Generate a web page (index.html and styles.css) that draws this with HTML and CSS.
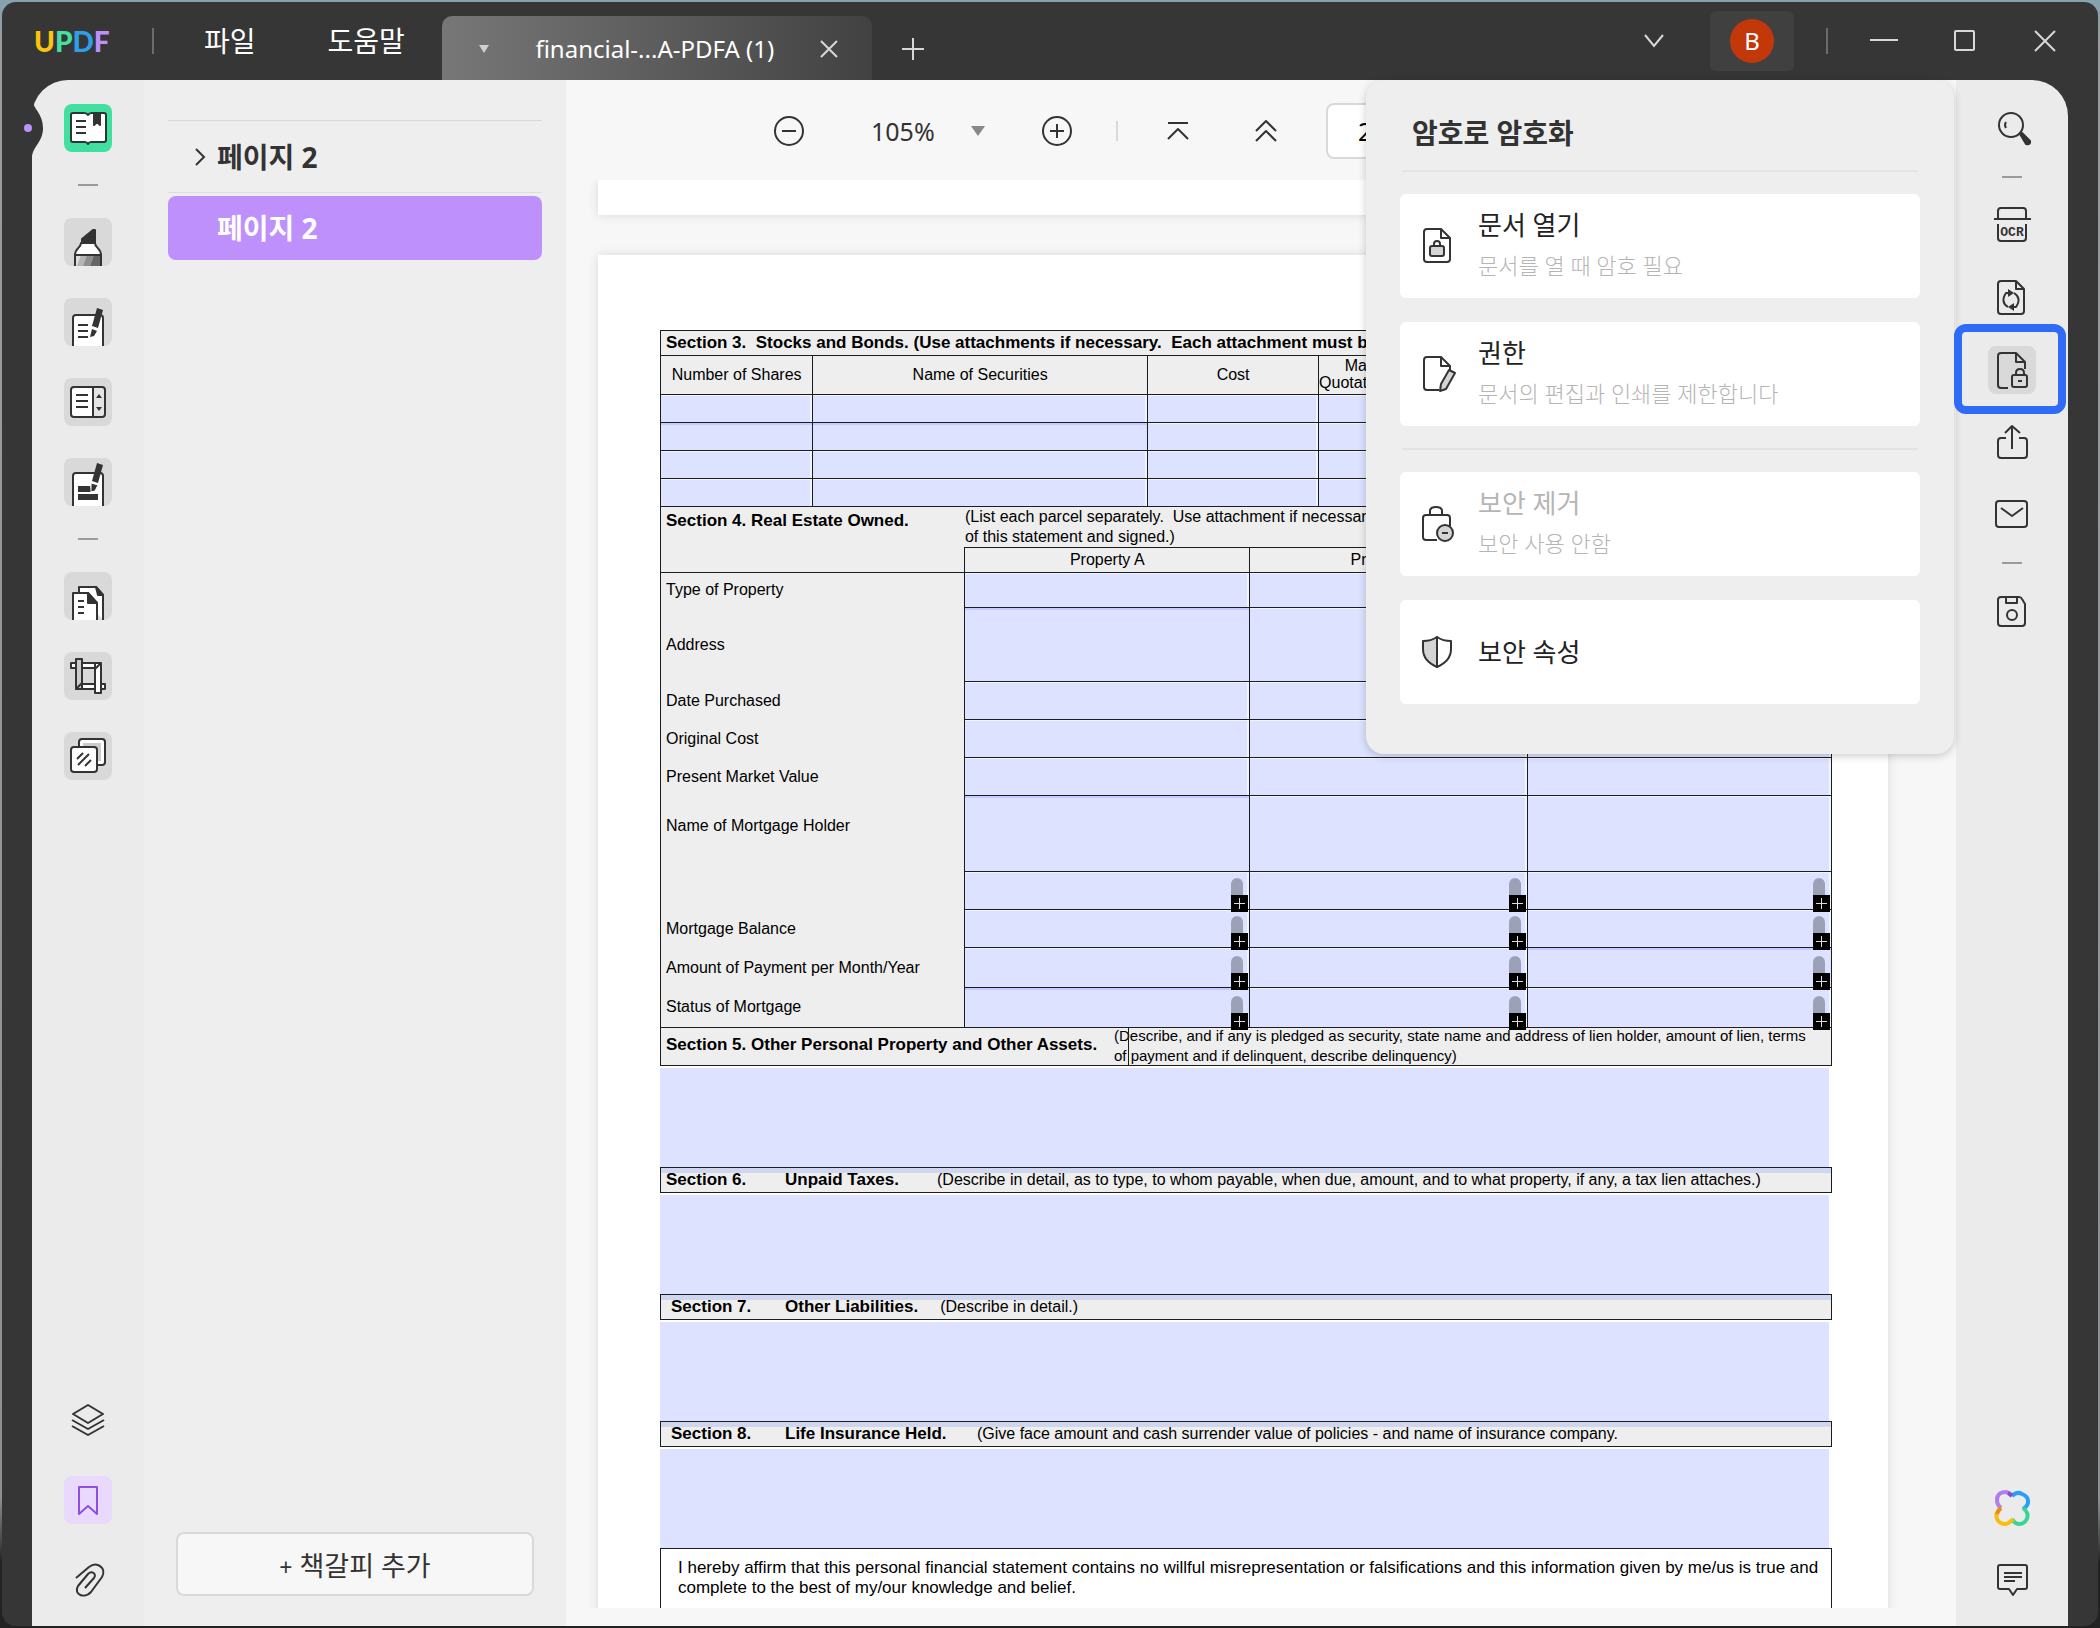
FILE: index.html
```html
<!DOCTYPE html>
<html lang="ko">
<head>
<meta charset="utf-8">
<title>UPDF</title>
<link rel="stylesheet" href="styles.css">
</head>
<body>
<div class="app">
  <header class="titlebar">
    <div class="logo" aria-label="UPDF"><span class="logo-u">U</span><span class="logo-p">P</span><span class="logo-d">D</span><span class="logo-f">F</span></div>
    <span class="bar-divider"></span>
    <nav class="menu"><button class="menu-item">파일</button><button class="menu-item">도움말</button></nav>
    <div class="tab">
      <button class="plain" aria-label="탭 목록"><svg width="12" height="10" viewBox="0 0 12 10"><path d="M1 1h10L6 9z" fill="#d0d0d0"/></svg></button>
      <span class="tab-name">financial-...A-PDFA (1)</span>
      <button class="plain" aria-label="탭 닫기"><svg width="18" height="18" viewBox="0 0 18 18" class="light"><path d="M1 1l16 16M17 1L1 17"/></svg></button>
    </div>
    <button class="plain new-tab" aria-label="새 탭"><svg width="24" height="24" viewBox="0 0 24 24" class="light"><path d="M12 1v22M1 12h22"/></svg></button>
    <div class="window-tools">
      <button class="plain chevron" aria-label="더 보기"><svg width="22" height="14" viewBox="0 0 22 14" class="light"><path d="M2 1l9 11 9-11"/></svg></button>
      <button class="account" aria-label="계정"><span class="avatar">B</span></button>
      <span class="bar-divider"></span>
      <button class="plain win" aria-label="최소화"><svg width="28" height="22" viewBox="0 0 28 22" class="light"><path d="M0 10h28"/></svg></button>
      <button class="plain win" aria-label="최대화"><svg width="22" height="22" viewBox="0 0 22 22" class="light"><rect x="1" y="1" width="19" height="19" rx="1"/></svg></button>
      <button class="plain win" aria-label="닫기"><svg width="22" height="22" viewBox="0 0 22 22" class="light"><path d="M1 1l20 20M21 1L1 21"/></svg></button>
    </div>
  </header>

  <main class="workspace">
    <aside class="rail rail-left">
      <svg class="notch" width="24" height="60" viewBox="0 0 24 60"><path d="M8 0c1 8 11 14 11 28S9 46 8 57V0z" fill="#363636"/><circle cx="4" cy="28" r="4" fill="#be90fc"/></svg>
      <button class="tool tool-active" aria-label="읽기"><svg viewBox="0 0 48 48"><path d="M9 9h11q3 0 4 2 1-2 4-2h12q2 0 2 2v25q0 2-2 2H27q-2 0-3 2-1-2-3-2H9q-2 0-2-2V11q0-2 2-2z" fill="#fff"/><path d="M12 17h10M12 23h10M12 29h10"/><path d="M30 9h6v12l-3-3-3 3z" class="solid"/></svg></button>
      <span class="rail-divider"></span>
      <button class="tool tool-tile" aria-label="주석"><svg viewBox="0 0 48 48"><path d="M18 25v-4l11-9h2v13z" class="solid"/><path d="M17 25h14c0 5 6 5 6 12H11c0-7 6-7 6-12z" fill="#fff"/><path d="M11 37h26v11H11z" fill="#ddd" stroke="none"/><path d="M17 37h6l-4 11h-6z" fill="#b5b5b5" stroke="none"/><path d="M23 37h7l-4 11h-7z" fill="#8e8e8e" stroke="none"/><path d="M30 37h7v11H26z" fill="#666" stroke="none"/><path d="M11 48V37h26v11"/></svg></button>
      <button class="tool tool-tile" aria-label="편집"><svg viewBox="0 0 48 48"><path d="M9 48V20q0-3 3-3h24q3 0 3 3v28" fill="#fff"/><path d="M14 27h10M14 33h10M14 39h10"/><path d="M33 10l6 2-5 18-6-2z" class="solid" stroke="none"/><path d="M28 31l5 2-3 5-4 1z" class="solid" stroke="none"/></svg></button>
      <button class="tool tool-tile" aria-label="양식"><svg viewBox="0 0 48 48"><path d="M29 9h9q3 0 3 3v24q0 3-3 3h-9z" fill="#e4e4e4"/><path d="M29 9H10q-3 0-3 3v24q0 3 3 3h19z" fill="#fff"/><path d="M12 17h12M12 23h12M12 29h12"/><path d="M32 20l3-4 3 4zM32 29l3 4 3-4z" class="solid" stroke="none"/></svg></button>
      <button class="tool tool-tile" aria-label="교정"><svg viewBox="0 0 48 48"><path d="M9 48V18q0-3 3-3h24q3 0 3 3v30" fill="#fff"/><path d="M14 28h12l2 6H14zM14 36h20v6H14z" class="solid" stroke="none"/><path d="M33 5l6 2-5 18-6-2z" class="solid" stroke="none"/><path d="M27 25l7 2-3 6-4 1z" class="solid" stroke="#fff" stroke-width="1"/></svg></button>
      <span class="rail-divider"></span>
      <button class="tool tool-tile" aria-label="페이지 구성"><svg viewBox="0 0 48 48"><path d="M15 20v-5h17l7 8v25" fill="#fff"/><path d="M32 15l7 8h-5z" class="solid"/><path d="M9 48V21h15l9 10v17" fill="#fff"/><path d="M24 21l9 10h-9z" class="solid"/><path d="M14 29h6M14 35h6M14 41h6"/></svg></button>
      <button class="tool tool-tile" aria-label="자르기"><svg viewBox="0 0 48 48"><path d="M7 11h29v5H7zM12 32h29v5H12z" fill="#fff"/><path d="M12 7h6v30h-6z" fill="#ccc"/><path d="M31 11h6v30h-6z" fill="#fff"/><path d="M12 37l6-6M31 17l6-6"/></svg></button>
      <button class="tool tool-tile" aria-label="워터마크"><svg viewBox="0 0 48 48"><rect x="15" y="7" width="26" height="26" rx="3" fill="#fff"/><path d="M19 11h18v18H19z" fill="#ccc" stroke="none"/><rect x="7" y="15" width="26" height="25" rx="3" fill="#fff"/><path d="M13 27l6-6M14 33l11-11M21 34l6-6"/></svg></button>
      <div class="rail-bottom">
        <button class="tool" aria-label="레이어"><svg viewBox="0 0 48 48"><path d="M24 9l15 9-15 9-15-9zM8 24l16 9 16-9M8 30l16 9 16-9"/></svg></button>
        <button class="tool tool-bookmark" aria-label="책갈피"><svg viewBox="0 0 48 48"><path d="M15 11h18v27l-9-8-9 8z" stroke="#8f50df"/></svg></button>
        <button class="tool" aria-label="첨부파일"><svg viewBox="0 0 48 48"><path d="M12 22l13-11c8-6 18 1 13 10L27 36c-6 7-18 3-13-6l10-12c4-4 9 0 6 4L21 32"/></svg></button>
      </div>
    </aside>

    <section class="bookmarks">
      <ul class="tree">
        <li class="tree-row"><svg width="12" height="20" viewBox="0 0 12 20"><path d="M2 2l8 8-8 8" fill="none" stroke="#333" stroke-width="2"/></svg><span>페이지 2</span></li>
        <li class="tree-row tree-selected"><span>페이지 2</span></li>
      </ul>
      <button class="add-bookmark"><span class="plus">+</span> 책갈피 추가</button>
    </section>

    <section class="viewer">
      <div class="toolbar">
        <button class="plain" aria-label="축소"><svg width="32" height="32" viewBox="0 0 32 32" class="dark"><circle cx="16" cy="16" r="14"/><path d="M9 16h14"/></svg></button>
        <span class="zoom">105%<svg width="14" height="10" viewBox="0 0 14 10"><path d="M0 0h14L7 10z" fill="#888"/></svg></span>
        <button class="plain" aria-label="확대"><svg width="32" height="32" viewBox="0 0 32 32" class="dark"><circle cx="16" cy="16" r="14"/><path d="M9 16h14M16 9v14"/></svg></button>
        <span class="toolbar-divider"></span>
        <button class="plain first" aria-label="첫 페이지"><svg width="24" height="24" viewBox="0 0 24 24" class="dark"><path d="M2 4h20M2 20L12 10l10 10"/></svg></button>
        <button class="plain prev" aria-label="이전 페이지"><svg width="24" height="24" viewBox="0 0 24 24" class="dark"><path d="M2 12L12 2l10 10M2 22l10-10 10 10"/></svg></button>
        <input class="page-number" aria-label="페이지 번호" value="2">
      </div>
      <div class="pages">
        <div class="sheet sheet-previous"></div>
        <article class="sheet form">
          <table class="grid stocks">
            <colgroup><col class="c-shares"><col class="c-name"><col class="c-cost"><col class="c-quote"><col class="c-date"><col></colgroup>
            <tr class="r-title"><th colspan="6" class="left">Section 3.&nbsp; Stocks and Bonds. (Use attachments if necessary.&nbsp; Each attachment must be</th></tr>
            <tr class="r-head"><td>Number of Shares</td><td>Name of Securities</td><td>Cost</td><td>Market Value Quotation/Exchange</td><td></td><td></td></tr>
            <tr class="r-line"><td class="field"></td><td class="field"></td><td class="field"></td><td class="field"></td><td class="field"></td><td class="field"></td></tr>
            <tr class="r-line"><td class="field tinted"></td><td class="field tinted"></td><td class="field"></td><td class="field"></td><td class="field"></td><td class="field"></td></tr>
            <tr class="r-line"><td class="field"></td><td class="field"></td><td class="field"></td><td class="field"></td><td class="field"></td><td class="field"></td></tr>
            <tr class="r-line"><td class="field"></td><td class="field"></td><td class="field"></td><td class="field"></td><td class="field"></td><td class="field"></td></tr>
          </table>
          <table class="grid estate">
            <colgroup><col class="c-label"><col class="c-a"><col class="c-b"><col></colgroup>
            <tr class="r-note"><th rowspan="2" class="left estate-title">Section 4. Real Estate Owned.</th><td colspan="3" class="note">(List each parcel separately.&nbsp; Use attachment if necessary.<br>of this statement and signed.)</td></tr>
            <tr class="r-props"><td>Property A</td><td>Property B</td><td></td></tr>
            <tr class="h-35"><th class="label">Type of Property</th><td class="field"></td><td class="field"></td><td class="field"></td></tr>
            <tr class="h-74"><th class="label">Address</th><td class="field tinted"></td><td class="field"></td><td class="field"></td></tr>
            <tr class="h-38"><th class="label">Date Purchased</th><td class="field"></td><td class="field"></td><td class="field"></td></tr>
            <tr class="h-38"><th class="label">Original Cost</th><td class="field"></td><td class="field"></td><td class="field"></td></tr>
            <tr class="h-38"><th class="label">Present Market Value</th><td class="field"></td><td class="field"></td><td class="field"></td></tr>
            <tr class="h-76"><th class="label label-high">Name of Mortgage Holder</th><td class="field tinted"></td><td class="field"></td><td class="field"></td></tr>
            <tr class="h-38"><th class="label"></th><td class="field"><button class="more" aria-label="더 보기"></button></td><td class="field"><button class="more" aria-label="더 보기"></button></td><td class="field"><button class="more" aria-label="더 보기"></button></td></tr>
            <tr class="h-38"><th class="label">Mortgage Balance</th><td class="field"><button class="more" aria-label="더 보기"></button></td><td class="field"><button class="more" aria-label="더 보기"></button></td><td class="field"><button class="more" aria-label="더 보기"></button></td></tr>
            <tr class="h-40"><th class="label">Amount of Payment per Month/Year</th><td class="field"><button class="more" aria-label="더 보기"></button></td><td class="field"><button class="more" aria-label="더 보기"></button></td><td class="field tinted"><button class="more" aria-label="더 보기"></button></td></tr>
            <tr class="h-40 r-last"><th class="label">Status of Mortgage</th><td class="field tinted"><button class="more" aria-label="더 보기"></button></td><td class="field"><button class="more" aria-label="더 보기"></button></td><td class="field"><button class="more" aria-label="더 보기"></button></td></tr>
          </table>
          <div class="assets-head">
            <label for="assets">Section 5. Other Personal Property and Other Assets.</label>
            <p>(Describe, and if any is pledged as security, state name and address of lien holder, amount of lien, terms<br>of payment and if delinquent, describe delinquency)</p>
          </div>
          <textarea class="answer" id="assets"></textarea>
          <label class="head" for="taxes"><b class="num">Section 6.</b><b class="name">Unpaid Taxes.</b><span>(Describe in detail, as to type, to whom payable, when due, amount, and to what property, if any, a tax lien attaches.)</span></label>
          <textarea class="answer" id="taxes"></textarea>
          <label class="head head-inset" for="liabilities"><b class="num">Section 7.</b><b class="name">Other Liabilities.</b><span>(Describe in detail.)</span></label>
          <textarea class="answer" id="liabilities"></textarea>
          <label class="head head-inset" for="insurance"><b class="num">Section 8.</b><b class="name name-wide">Life Insurance Held.</b><span>(Give face amount and cash surrender value of policies - and name of insurance company.</span></label>
          <textarea class="answer" id="insurance"></textarea>
          <p class="affirm">I hereby affirm that this personal financial statement contains no willful misrepresentation or falsifications and this information given by me/us is true and<br>complete to the best of my/our knowledge and belief.</p>
        </article>
      </div>

      <div class="security">
        <h2>암호로 암호화</h2>
        <button class="card"><svg viewBox="0 0 32 36" width="32" height="36" class="dark"><path d="M5 1h14l9 9v21q0 3-3 3H5q-3 0-3-3V4q0-3 3-3z"/><path d="M19 1v9h9"/><path d="M12 18v-2q0-3 3-3t3 3v2"/><rect x="8" y="18" width="14" height="10" rx="2" fill="#d4d4d4"/></svg><span class="card-text"><span class="card-title">문서 열기</span><span class="card-sub">문서를 열 때 암호 필요</span></span></button>
        <button class="card"><svg viewBox="0 0 32 36" width="32" height="36" class="dark"><path d="M17 34H5q-3 0-3-3V4q0-3 3-3h14l9 9v4"/><path d="M19 1v9h9"/><path d="M27 14l6 3-9 16-6 2 1-7z" fill="#d4d4d4"/></svg><span class="card-text"><span class="card-title">권한</span><span class="card-sub">문서의 편집과 인쇄를 제한합니다</span></span></button>
        <hr>
        <button class="card" disabled><svg viewBox="0 0 32 36" width="32" height="36" class="dark"><path d="M8 9V5q0-4 6-4t6 4v4M15 34H4q-3 0-3-3V12q0-3 3-3h21q3 0 3 3v8"/><circle cx="23" cy="27" r="8" fill="#d4d4d4"/><path d="M20 27h6"/></svg><span class="card-text"><span class="card-title">보안 제거</span><span class="card-sub">보안 사용 안함</span></span></button>
        <button class="card"><svg viewBox="0 0 32 36" width="32" height="36" class="dark"><path d="M15 3Q9 7 1 7v8q0 12 14 18z" fill="#d4d4d4"/><path d="M15 3q6 4 14 4v8q0 12-14 18z"/></svg><span class="card-text"><span class="card-title">보안 속성</span></span></button>
      </div>
    </section>

    <aside class="rail rail-right">
      <button class="tool" aria-label="검색"><svg viewBox="0 0 48 48"><circle cx="23" cy="21" r="12"/><path d="M18 24q-2-3 0-6"/><path d="M32 30l2-1 8 8q1 4-4 3z" class="solid"/></svg></button>
      <span class="rail-divider"></span>
      <button class="tool" aria-label="OCR"><svg viewBox="0 0 48 48"><path d="M10 17V9q0-3 3-3h22q3 0 3 3v8M6 17h37M10 22v14q0 3 3 3h22q3 0 3-3V22"/><text x="24" y="34" class="ocr">OCR</text></svg></button>
      <button class="tool" aria-label="변환"><svg viewBox="0 0 48 48"><path d="M13 7h15l8 8v22q0 3-3 3H13q-3 0-3-3V10q0-3 3-3z"/><path d="M28 7v8h8M26 19q8 5 2 14h-4M20 33q-8-5-2-14h4"/><path d="M20 15v8l6-4zM26 29v8l-6-4z" class="solid" stroke="none"/></svg></button>
      <button class="tool tool-tile tool-current" aria-label="암호로 보호"><svg viewBox="0 0 48 48"><path d="M20 42h-7q-3 0-3-3V10q0-3 3-3h15l9 9v7M28 7v9h9"/><path d="M28 29v-2q0-4 4-4t4 4v2M30 35h4"/><rect x="24" y="29" width="15" height="12" rx="2"/></svg></button>
      <button class="tool" aria-label="공유"><svg viewBox="0 0 48 48"><path d="M18 20h-5q-3 0-3 3v14q0 3 3 3h23q3 0 3-3V23q0-3-3-3h-5M24 31V8M17 15l7-7 8 7"/></svg></button>
      <button class="tool" aria-label="이메일"><svg viewBox="0 0 48 48"><rect x="8" y="11" width="31" height="26" rx="3"/><path d="M13 18l11 8 11-8"/></svg></button>
      <span class="rail-divider"></span>
      <button class="tool" aria-label="저장"><svg viewBox="0 0 48 48"><path d="M13 9h18q2 0 3 2l3 5v19q0 3-3 3H13q-3 0-3-3V12q0-3 3-3zM18 9v6h11V9"/><circle cx="24" cy="27" r="5"/></svg></button>
      <div class="rail-bottom">
        <button class="tool" aria-label="UPDF AI"><svg viewBox="0 0 48 48" class="clover"><path d="M24 12C19 5 9 8 9 16q0 5 4 8" stroke="#b07cf0"/><path d="M24 12q5-5 10-2c8 3 8 11 1 15" stroke="#27a0f5"/><path d="M35 24c9 7 3 16-4 16q-4 0-7-5" stroke="#38d596"/><path d="M13 24c-9 7-3 16 4 16q4 0 8-5" stroke="#f9bd12"/><path d="M20 9q2 1 4 3" stroke="#8350c7"/><path d="M13 24q-3 2-4 6" stroke="#e88d14"/></svg></button>
        <button class="tool" aria-label="댓글"><svg viewBox="0 0 48 48"><path d="M12 9h25q2 0 2 2v20q0 2-2 2h-8l-4 6-4-6h-9q-2 0-2-2V11q0-2 2-2z"/><path d="M16 17h18M16 21h18M16 25h11"/></svg></button>
      </div>
    </aside>
  </main>
</div>
</body>
</html>
```
FILE: styles.css
```css
* { box-sizing: border-box; }

body {
  margin: 0;
  height: 100vh;
  padding: 2px;
  background: linear-gradient(#86a2ae 2px, #9a9c9d 40px, #8f9091 92%, #222 96%);
  font-family: "Noto Sans", "Noto Sans CJK KR", sans-serif;
  color: #333;
}

button, input, textarea { font: inherit; color: inherit; }
button { padding: 0; border: 0; background: none; }
p, h2, ul { margin: 0; padding: 0; }
svg { display: block; }

.light { fill: none; stroke: #d8d8d8; stroke-width: 2; }
.dark { fill: none; stroke: #333; stroke-width: 2; stroke-linejoin: round; }
.plain { display: flex; align-items: center; justify-content: center; flex: none; }

.app {
  display: flex;
  flex-direction: column;
  height: 100%;
  background: #363636;
  border-radius: 14px;
  overflow: hidden;
}

/* Title bar */
.titlebar { display: flex; height: 78px; flex: none; align-items: center; padding: 0 42px 0 32px; }
.logo { display: flex; width: 78px; font: 900 28px/32px Lato, sans-serif; }
.logo-u { color: #fcc40c; }
.logo-p { color: #43e0a0; }
.logo-d { color: #2f9fea; }
.logo-f { color: #be90fc; }
.bar-divider { width: 2px; height: 26px; background: #6c6c6c; margin-left: 40px; }
.menu { display: flex; gap: 72px; margin-left: 50px; }
.menu-item { color: #fff; font-size: 28px; line-height: 40px; }
.tab {
  display: flex;
  align-items: center;
  align-self: flex-end;
  justify-content: space-between;
  width: 430px;
  height: 64px;
  margin-left: 37px;
  padding: 2px 34px 0 36px;
  border-radius: 10px 10px 0 0;
  background: linear-gradient(90deg, #777, #424242);
}
.tab-name { color: #fff; font-size: 24px; line-height: 32px; }
.new-tab { margin: 16px 0 0 29px; }
.window-tools { display: flex; align-items: center; margin-left: auto; }
.account { display: flex; align-items: center; justify-content: center; width: 84px; height: 60px; margin-left: 45px; border-radius: 6px; background: #404040; }
.avatar { width: 44px; height: 44px; border-radius: 50%; background: #c2380b; color: #fff; font-size: 24px; line-height: 44px; }
.window-tools .bar-divider { margin: 0 14px 0 32px; }
.win { margin-left: 28px; }
.win + .win { margin-left: 56px; }
.win + .win + .win { margin-left: 58px; }

/* Workspace */
.workspace {
  position: relative;
  display: flex;
  flex: 1;
  min-height: 0;
  margin: 0 30px;
}
.rail {
  display: flex;
  flex-direction: column;
  align-items: center;
  flex: none;
  width: 112px;
  padding: 24px 0 22px;
  background: #ebebeb;
}
.rail-left { position: relative; gap: 32px; border-radius: 36px 0 0 0; }
.rail-right { gap: 24px; border-radius: 0 36px 0 0; }
.notch { position: absolute; left: -8px; top: 20px; }
.tool { position: relative; flex: none; width: 48px; height: 48px; border-radius: 8px; }
.tool svg { width: 48px; height: 48px; fill: none; stroke: #333; stroke-width: 2; stroke-linejoin: round; }
.tool .solid { fill: #333; }
.tool .clover { stroke-width: 4; }
.tool .ocr { font: 700 13px "Liberation Mono", monospace; fill: #333; stroke: none; text-anchor: middle; }
.tool-active { background: #40e0a0; }
.tool-tile { background: #d9d9d9; }
.tool-bookmark { background: #e8d9fd; }
.tool-current::after { content: ""; position: absolute; inset: -22px -30px -20px -34px; border: 8px solid #2f6bf5; border-radius: 12px; z-index: 3; }
.rail-divider { flex: none; width: 20px; height: 2px; background: #9a9a9a; }
.rail-bottom { display: flex; flex-direction: column; gap: inherit; margin-top: auto; }

/* Bookmark panel */
.bookmarks {
  display: flex;
  flex-direction: column;
  justify-content: space-between;
  flex: none;
  width: 422px;
  padding: 40px 24px 30px;
  background: #eee;
}
.tree { list-style: none; border-top: 1px solid #d8d8d8; font-size: 28px; font-weight: 700; line-height: 40px; }
.tree-row { display: flex; align-items: center; gap: 11px; height: 72px; padding-left: 26px; border-bottom: 1px solid #dcdcdc; }
.tree-selected { height: 64px; margin-top: 3px; padding-left: 49px; border: 0; border-radius: 8px; background: #be90fc; color: #fff; }
.add-bookmark { height: 64px; margin: 0 8px; border: 2px solid #d9d9d9; border-radius: 8px; background: #f7f7f7; font-size: 27px; }
.plus { font-size: 23px; }

/* Viewer */
.viewer { position: relative; display: flex; flex-direction: column; flex: 1; min-width: 0; padding-bottom: 18px; background: #f7f7f7; }
.toolbar { display: flex; align-items: center; flex: none; height: 100px; padding: 2px 0 0 207px; }
.zoom { display: flex; align-items: center; justify-content: space-between; width: 114px; margin: 0 56px 0 66px; font-size: 25px; line-height: 32px; }
.toolbar-divider { width: 2px; height: 20px; margin-left: 43px; background: #d9d9d9; }
.first { margin-left: 48px; }
.prev { margin-left: 64px; }
.page-number { width: 110px; height: 56px; margin-left: 48px; padding: 0 30px; border: 2px solid #d9d9d9; border-radius: 8px; background: #fff; color: #000; font-size: 25px; }
.pages { display: flex; flex-direction: column; gap: 40px; flex: 1; min-height: 0; padding: 0 68px 0 32px; overflow: hidden; }
.sheet { flex: none; background: #fff; box-shadow: 0 0 10px rgba(0, 0, 0, .12); }
.sheet-previous { height: 35px; }

/* Form */
.form { padding: 75px 56px 60px 62px; color: #000; font: 16px/18px "Liberation Sans", Arial, sans-serif; }
.grid { width: 100%; border-collapse: collapse; table-layout: fixed; background: #eee; }
.grid td, .grid th { position: relative; padding: 0; border: 1px solid #1d1d1d; text-align: center; }
.grid .left { padding-left: 5px; font-size: 17px; text-align: left; white-space: nowrap; overflow: hidden; }
.grid .field { background: #dce2ff; box-shadow: inset -3px 2px 0 -1px #f2f4ff; }
.grid .tinted { box-shadow: inset 0 2px 0 #c3caff; }
.c-shares { width: 13%; }
.c-name { width: 28.6%; }
.c-cost { width: 14.6%; }
.c-quote { width: 12.4%; }
.c-date { width: 14%; }
.r-title { height: 25px; }
.r-head { height: 39px; line-height: 17px; }
.grid .r-head td { padding-bottom: 2px; }
.r-line { height: 28px; }
.estate { margin-top: -1px; }
.c-label { width: 26%; }
.c-a { width: 24.3%; }
.c-b { width: 23.7%; }
.r-note { height: 41px; line-height: 20px; }
.r-props { height: 25px; }
.grid .estate-title { padding-top: 4px; border-right: 0; vertical-align: top; }
.grid .note { border-left: 0; text-align: left; vertical-align: top; white-space: nowrap; }
.grid .label { padding: 0 0 0 5px; border-top: 0; border-bottom: 0; font-weight: 400; text-align: left; }
.grid .label-high { padding-bottom: 16px; }
.h-35 { height: 35px; }
.h-38 { height: 38px; }
.h-40 { height: 40px; }
.h-74 { height: 74px; }
.h-76 { height: 76px; }
.grid .h-35 .label { border-top: 1px solid #1d1d1d; }
.grid .r-last .label { border-bottom: 1px solid #1d1d1d; }
.more {
  position: absolute;
  right: 1px;
  bottom: -3px;
  width: 17px;
  height: 34px;
  z-index: 1;
  border-radius: 7px 7px 0 0;
  background:
    linear-gradient(#ddd, #ddd) 3px 25px / 11px 1px no-repeat,
    linear-gradient(#ddd, #ddd) 8px 20px / 1px 11px no-repeat,
    linear-gradient(#000, #000) 0 17px / 17px 17px no-repeat;
}
.more::before { content: ""; position: absolute; left: 0; top: 0; width: 12px; height: 17px; border-radius: 6px 6px 0 0; background: #9ba2b8; }

.assets-head { display: flex; height: 38px; padding-left: 5px; border: 1px solid #1d1d1d; border-top: 0; background: #eee; }
.assets-head label { width: 448px; flex: none; font-size: 17px; font-weight: 700; line-height: 34px; }
.assets-head p { position: relative; font-size: 15px; line-height: 20px; white-space: nowrap; margin-top: -2px; }
.assets-head p::before { content: ""; position: absolute; left: 14px; top: 2px; width: 1px; height: 37px; background: #1d1d1d; }
.answer { display: block; width: calc(100% - 3px); height: 99px; margin-top: 2px; padding: 4px; border: 0; background: #dce2ff; resize: none; }
.head { display: flex; gap: 22px; height: 26px; padding-left: 5px; border: 1px solid #1d1d1d; background: #eee; box-shadow: inset 0 5px 0 #d0d6ee; line-height: 23px; white-space: nowrap; }
.head b { font-size: 17px; }
.num { width: 97px; }
.head-inset { padding-left: 10px; }
.head-inset .num { width: 92px; }
.name { min-width: 130px; }
.name-wide { min-width: 170px; }
.affirm { height: 160px; padding: 9px 17px; border: 1px solid #1d1d1d; font-size: 17px; line-height: 20px; white-space: nowrap; }

/* Security panel */
.security {
  position: absolute;
  top: 0;
  right: 2px;
  z-index: 2;
  display: flex;
  flex-direction: column;
  gap: 24px;
  width: 588px;
  padding: 24px 34px 50px;
  border-radius: 18px;
  background: #eee;
  box-shadow: 0 2px 8px rgba(0, 0, 0, .2);
}
.security h2 { height: 68px; margin: 0 2px -2px; padding-left: 10px; border-bottom: 2px solid #e4e4e4; font-size: 28px; line-height: 58px; }
.security hr { width: calc(100% - 4px); height: 2px; margin: -2px 2px -2px; border: 0; background: #e2e2e2; }
.card { display: flex; align-items: center; gap: 24px; height: 104px; padding-left: 22px; border-radius: 6px; background: #fff; text-align: left; }
.card svg { overflow: visible; }
.card-text { display: flex; flex-direction: column; gap: 4px; }
.card-title { font-size: 26px; line-height: 36px; color: #222; }
.card-sub { margin-bottom: 2px; font-size: 22px; line-height: 36px; color: #b5b5b5; font-weight: 300; }
.card:disabled .card-title { color: #b5b5b5; }
```
